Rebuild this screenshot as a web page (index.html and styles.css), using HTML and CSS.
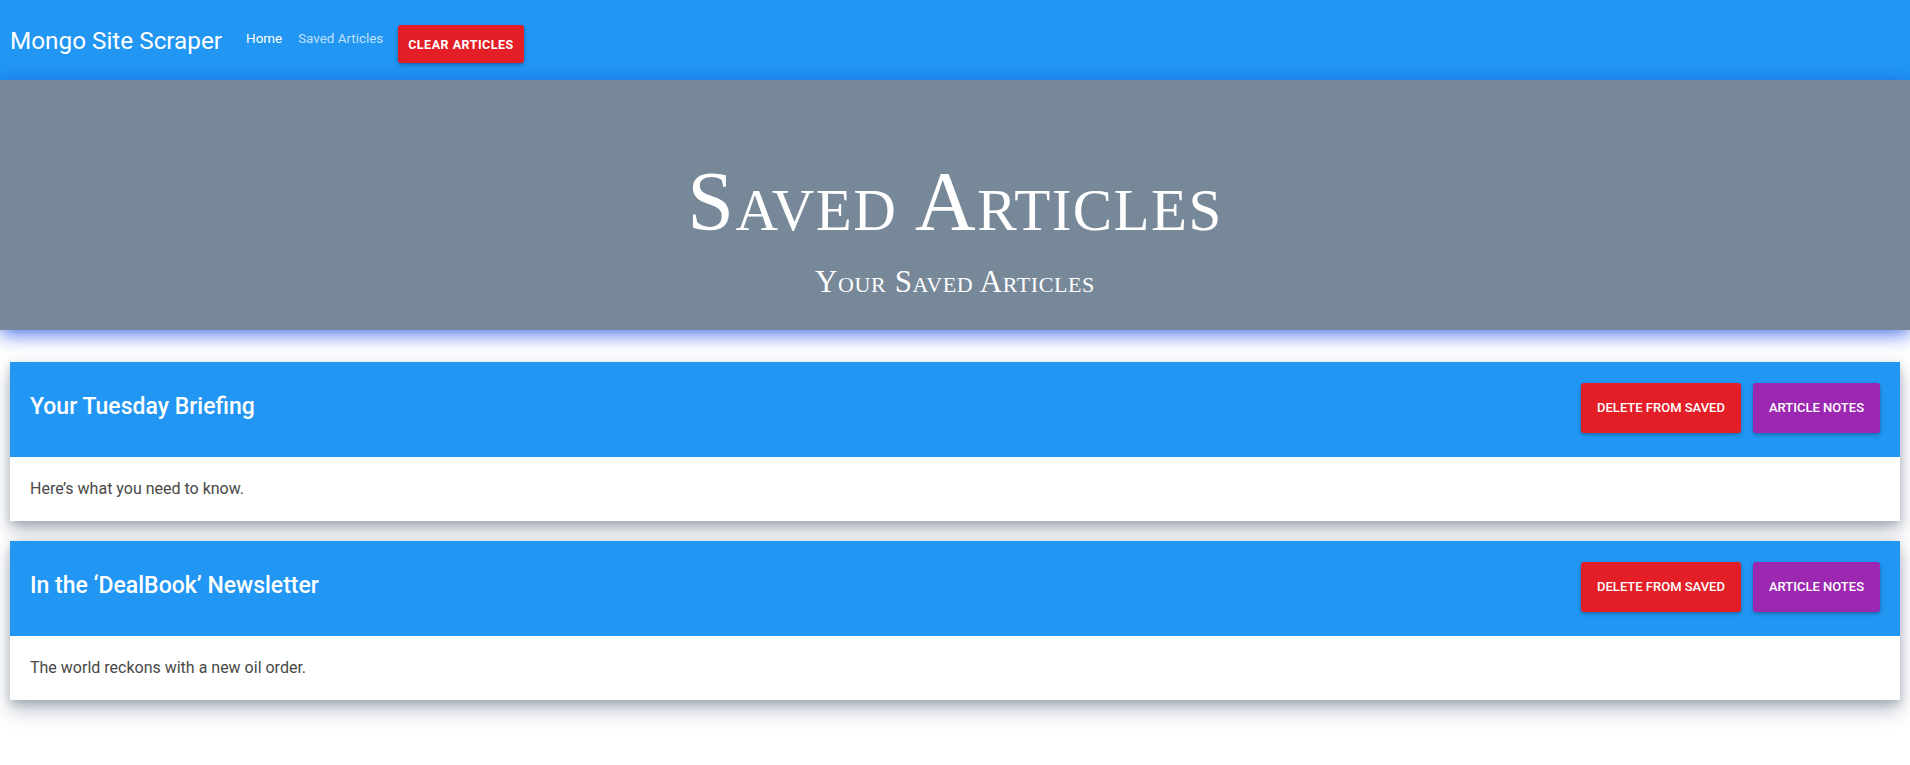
FILE: index.html
```html
<!DOCTYPE html>
<html lang="en">
<head>
<meta charset="utf-8">
<title>Mongo Site Scraper</title>
<link rel="stylesheet" href="styles.css">
</head>
<body>
  <nav class="navbar">
    <a class="brand" href="#">Mongo Site Scraper</a>
    <ul class="nav-links">
      <li><a class="nav-link active" href="#">Home</a></li>
      <li><a class="nav-link" href="#">Saved Articles</a></li>
    </ul>
    <button class="btn btn-clear">Clear Articles</button>
  </nav>

  <header class="hero">
    <h1 class="hero-title">Saved Articles</h1>
    <p class="hero-sub">Your Saved Articles</p>
  </header>

  <main class="articles">
    <article class="card">
      <div class="card-header">
        <h2 class="card-title">Your Tuesday Briefing</h2>
        <div class="card-actions">
          <button class="btn btn-delete">Delete From Saved</button>
          <button class="btn btn-notes">Article Notes</button>
        </div>
      </div>
      <div class="card-body">Here’s what you need to know.</div>
    </article>

    <article class="card">
      <div class="card-header">
        <h2 class="card-title">In the ‘DealBook’ Newsletter</h2>
        <div class="card-actions">
          <button class="btn btn-delete">Delete From Saved</button>
          <button class="btn btn-notes">Article Notes</button>
        </div>
      </div>
      <div class="card-body">The world reckons with a new oil order.</div>
    </article>
  </main>
</body>
</html>
```
FILE: styles.css
```css
* { box-sizing: border-box; }

html, body {
  margin: 0;
  padding: 0;
  background: #ffffff;
  font-family: Roboto, "Liberation Sans", Arial, sans-serif;
}

.navbar {
  position: relative;
  z-index: 1;
  display: flex;
  align-items: center;
  height: 80px;
  padding: 0 10px;
  background: #2196f3;
}

.brand {
  font-size: 24.3px;
  color: #ffffff;
  text-decoration: none;
  margin-right: 16px;
}

.nav-links {
  display: flex;
  list-style: none;
  margin: 0 7px 3px 0;
  padding: 0;
}

.nav-link {
  display: block;
  padding: 0 8px;
  font-size: 13.4px;
  color: rgba(255, 255, 255, 0.72);
  text-decoration: none;
}

.nav-link.active {
  color: #ffffff;
}

.btn {
  border: none;
  border-radius: 3px;
  color: #ffffff;
  font-family: Roboto, "Liberation Sans", Arial, sans-serif;
  text-transform: uppercase;
  cursor: pointer;
  box-shadow: 0 2px 4px rgba(0, 0, 0, 0.22), 0 1px 2px rgba(0, 0, 0, 0.12);
}

.btn-clear {
  margin-top: 8px;
  height: 38px;
  padding: 0 10px;
  font-size: 12.5px;
  font-weight: 700;
  letter-spacing: 0.5px;
  background: #e41e26;
}

.hero {
  position: relative;
  z-index: 2;
  height: 250px;
  padding-top: 80px;
  background: #778899;
  text-align: center;
  color: #ffffff;
  box-shadow: 0 4px 18px rgba(25, 75, 225, 0.8);
}

.hero-title {
  margin: 0;
  font-family: "Liberation Serif", "Times New Roman", serif;
  font-variant: small-caps;
  font-weight: 400;
  font-size: 84px;
  line-height: 84px;
  letter-spacing: 1.4px;
}

.hero-sub {
  margin: 22px 0 0;
  font-family: "Liberation Serif", "Times New Roman", serif;
  font-variant: small-caps;
  font-size: 31px;
  line-height: 31px;
  letter-spacing: 0.6px;
}

.articles {
  display: flex;
  flex-direction: column;
  gap: 20px;
  padding: 32px 10px 40px;
}

.card {
  background: #ffffff;
  box-shadow: 0 10px 18px rgba(30, 45, 75, 0.3), 0 3px 8px rgba(30, 45, 75, 0.2);
}

.card-header {
  display: flex;
  align-items: center;
  justify-content: space-between;
  height: 95px;
  padding: 0 20px;
  background: #2196f3;
}

.card-title {
  margin: 0 0 7px;
  font-size: 23px;
  font-weight: 500;
  color: #ffffff;
}

.card-actions {
  display: flex;
  gap: 12px;
  margin-top: -4px;
}

.btn-delete,
.btn-notes {
  height: 50px;
  padding: 0 16px;
  font-size: 13px;
  font-weight: 500;
}

.btn-delete { background: #e41e26; }
.btn-notes { background: #9c27b0; }

.card-body {
  padding: 20px;
  font-size: 16px;
  line-height: 24px;
  color: #484848;
}
```
